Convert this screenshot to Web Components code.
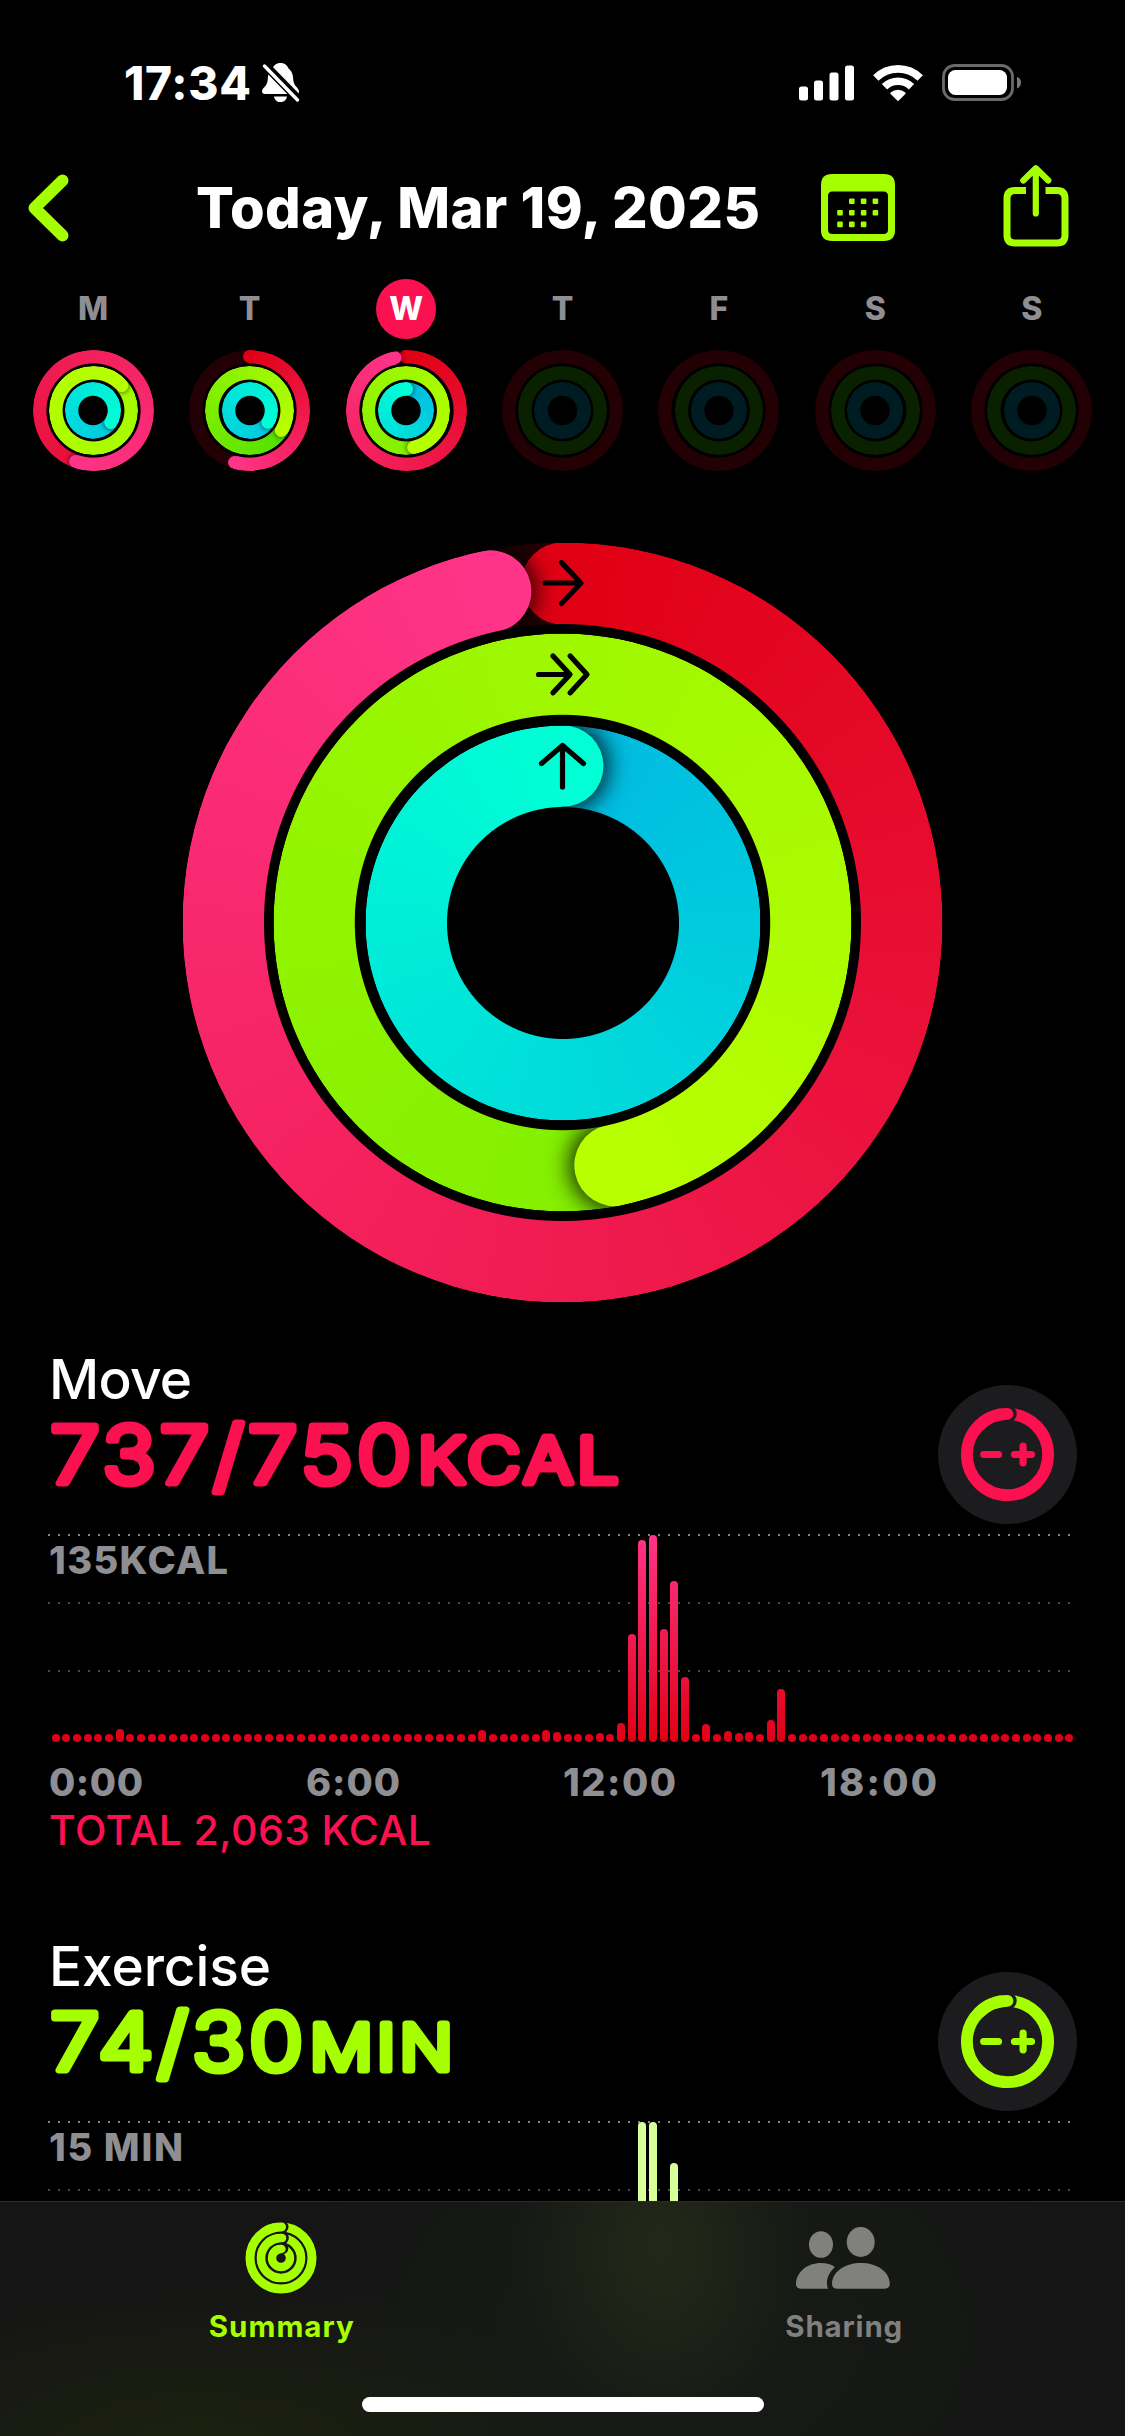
<!DOCTYPE html>
<html lang="en">
<head>
<meta charset="utf-8">
<title>Activity</title>
<style>
  html, body {
    margin: 0;
    background: #000;
  }

  body {
    width: 1125px;
    height: 2436px;
    overflow: hidden;
    font-family: Inter, "Liberation Sans", sans-serif;
    font-optical-sizing: none;
    color: #fff;
  }
</style>
</head>
<body>
<activity-app>
  <status-bar slot="status" time="17:34"></status-bar>
  <nav-header slot="header">Today, Mar 19, 2025</nav-header>

  <week-strip slot="week">
    <week-day letter="M">
      <activity-rings size="mini"
        move="199.3 #e80f38 #ff3488 lap"
        exercise="49 #a4fa00 #b8ff00 lap"
        stand="124 #00c8e0 #00ffd5 lap"></activity-rings>
    </week-day>
    <week-day letter="T">
      <activity-rings size="mini"
        move="196 #e00014 #ff3488"
        exercise="122 #52e000 #b8ff00 lap"
        stand="123.5 #00c8e0 #00ffd5 lap"></activity-rings>
    </week-day>
    <week-day letter="W" selected>
      <activity-rings size="mini"
        move="347.8 #e00014 #ff3488"
        exercise="168.5 #82ef00 #b8ff00 lap"
        stand="0 #00b9e1 #00ffd5 lap"></activity-rings>
    </week-day>
    <week-day letter="T"><activity-rings size="mini"></activity-rings></week-day>
    <week-day letter="F"><activity-rings size="mini"></activity-rings></week-day>
    <week-day letter="S"><activity-rings size="mini"></activity-rings></week-day>
    <week-day letter="S"><activity-rings size="mini"></activity-rings></week-day>
  </week-strip>

  <activity-rings slot="rings" size="big"
    move="347.7 #e00014 #ff3488"
    exercise="167.8 #82ef00 #b8ff00 lap"
    stand="0 #00b9e1 #00ffd5 lap"></activity-rings>

  <metric-card slot="cards" name="Move" name-width="139" value="737/750" value-width="365"
    unit="KCAL" unit-x="369" unit-width="205" scale="135KCAL" scale-width="179" style="--tint: #fb1050">
    <bar-chart slot="chart" colors="#ff3488 #e00014"
      bars="6:13 40:12 46:12 47:10 51:9.3 53:19.5 54:108 55:202 56:207 57:113 58:161 59:65 61:18 63:10.7 64:9 65:10 67:22.5 68:53"></bar-chart>
    <fit-label slot="total" width="382">TOTAL 2,063 KCAL</fit-label>
  </metric-card>

  <metric-card slot="cards" name="Exercise" name-width="218" value="74/30" value-width="257"
    unit="MIN" unit-x="261" unit-width="147" scale="15 MIN" scale-width="134" style="--tint: #a6ff00">
    <bar-chart slot="chart" colors="#d9ff99 #d9ff99" bars="55:207 56:207 58:166"></bar-chart>
  </metric-card>

  <tab-bar slot="tabs"></tab-bar>
</activity-app>

<script>
/**
 * Three concentric rings, with optional arrows on the big size.
 * Each ring attribute: "head-angle start-colour end-colour [lap]"
 */
const RING_SIZES = {
  big: { outer: [380, 289.2, 197.5], width: 81.5, shadow: '0 0 22px 5px rgba(0, 0, 0, 0.8)' },
  mini: { outer: [60.5, 44.3, 28.1], width: 13.4, shadow: '0 0 4px 1px rgba(0, 0, 0, 0.5)' }
}

customElements.define('activity-rings',
  class extends HTMLElement {
    constructor () {
      super()
      this.attachShadow({ mode: 'open' })
    }

    connectedCallback () {
      const size = RING_SIZES[this.getAttribute('size')]
      const names = ['move', 'exercise', 'stand']
      const tracks = ['#220004', '#0a2100', '#001c23']
      const rings = names.map((name, i) => this.ring(size, size.outer[i], tracks[i], this.getAttribute(name))).join('')

      this.shadowRoot.innerHTML = `
<style>
:host {
  display: grid;
  place-items: center;
  width: ${size.outer[0] * 2}px;
  height: ${size.outer[0] * 2}px;
}
.ring, svg { grid-area: 1 / 1; }
.ring {
  display: grid;
  border-radius: 50%;
  overflow: hidden;
}
.ring > * { grid-area: 1 / 1; }
/* halves reach 1px over the middle, so no seam shows under the cap */
.half {
  width: calc(50% + 1px);
  overflow: hidden;
}
.turn { display: flex; justify-content: flex-end; }
.start { justify-content: flex-start; }
.cap {
  width: ${size.width}px;
  height: ${size.width}px;
  border-radius: 50%;
}
.head .cap {
  margin-left: ${1 - size.width / 2}px;
  box-shadow: ${size.shadow};
}
.start .half { display: flex; justify-content: flex-end; }
.start .cap { flex: none; margin-right: ${1 - size.width / 2}px; }
svg { z-index: 1; }
</style>
${rings}
${this.getAttribute('size') === 'big' ? this.arrows() : ''}`
    }

    ring (size, outer, track, spec) {
      const inner = outer - size.width
      const mask = `radial-gradient(circle, transparent ${inner - 0.5}px, #000 ${inner + 0.5}px)`
      let layers = ''
      if (spec) {
        const [angle, from, to, lap] = spec.split(' ')
        if (lap) {
          layers = `<div style="background: conic-gradient(from ${angle}deg, ${from}, ${to})"></div>`
        } else {
          layers = `<div style="background: conic-gradient(${from}, ${to} ${angle}deg, transparent ${angle}deg)"></div>
<div class="turn start"><div class="half"><div class="cap" style="background: ${from}"></div></div></div>`
        }
        layers += `<div class="turn head" style="transform: rotate(${angle}deg)"><div class="half"><div class="cap" style="background: ${to}"></div></div></div>`
      }
      return `<div class="ring" style="width: ${outer * 2}px; height: ${outer * 2}px; background: ${track}; -webkit-mask: ${mask}; mask: ${mask}">${layers}</div>`
    }

    arrows () {
      return `
<svg width="760" height="760" viewBox="-380 -380 760 760" fill="none" stroke="#000" stroke-width="5.2" stroke-linecap="round" stroke-linejoin="round">
  <path d="M-17.500 -339.500H17.500M-1 -360L18.500 -339.500L-1 -319"/>
  <path d="M-24 -248H7M-9.500 -266.500L7.500 -248L-9.500 -229.700M7.700 -266.500L24.500 -248L7.700 -229.700"/>
  <path d="M0 -176V-135.500M-21 -159L0 -177L21 -159"/>
</svg>`
    }
  }
)

const statusTemplate = document.createElement('template')
statusTemplate.innerHTML = `
<style>
:host {
  display: flex;
  justify-content: space-between;
  align-items: center;
  box-sizing: border-box;
  height: 140px;
  padding: 26px 103px 0 124px;
}
div { display: flex; align-items: center; }
fit-label { font-size: 46px; line-height: 46px; font-weight: 800; }
.bell { margin-left: 11px; }
.wifi { margin: 0 19px 0 19px; }
</style>
<div>
  <fit-label width="127"></fit-label>
  <svg class="bell" width="38" height="40" viewBox="0 0 38 40">
    <path fill="#fff" d="M18.500 0C14 0 11.500 2.500 10.500 5.500C7 8 6 12 5.800 16C5.500 20 4.500 22 2 24.500C0.500 26 0 27.500 0 28.500C0 30 1 31 3 31H34.500C36.500 31 37 30 37 28.500C37 27 36 25.700 35 24.500C32.500 22 31.500 20 31.200 16C31 12 30 8 26.500 5.500C25.500 2.500 23 0 18.500 0ZM12 33.500H25C24.500 37 22 39 18.500 39C15 39 12.500 37 12 33.500Z"/>
    <path stroke="#000" stroke-width="8.500" d="M0 -1L40 40"/>
    <path stroke="#fff" stroke-width="3.400" stroke-linecap="round" d="M2.500 3L35.500 37"/>
  </svg>
</div>
<div>
  <svg width="55" height="36" viewBox="0 0 55 36" fill="#fff">
    <rect x="0" y="21.500" width="9" height="14" rx="2.500"/>
    <rect x="15" y="15.500" width="9" height="20" rx="2.500"/>
    <rect x="30.500" y="7.500" width="9" height="28" rx="2.500"/>
    <rect x="46" y="0.500" width="9" height="35" rx="2.500"/>
  </svg>
  <svg class="wifi" width="50" height="37" viewBox="0 0 50 37" fill="none">
    <path stroke="#fff" stroke-width="7.600" d="M2.800 13A31.500 31.500 0 0 1 47.200 13"/>
    <path stroke="#fff" stroke-width="7.600" d="M11.500 21.800A19.200 19.200 0 0 1 38.500 21.800"/>
    <path fill="#fff" d="M25 36.300L17.400 28.700Q17 28 17.700 27.500A11 11 0 0 1 32.300 27.500Q33 28 32.600 28.700Z"/>
  </svg>
  <svg width="80" height="38" viewBox="0 0 80 38">
    <rect x="1.500" y="1.500" width="69" height="34" rx="11" fill="none" stroke="#6a6a6a" stroke-width="2.800"/>
    <rect x="6" y="6" width="59" height="25" rx="7.500" fill="#fff"/>
    <path fill="#777" d="M75 13C78 13.500 79 16 79 18.500C79 21 78 23.500 75 24.500Z"/>
  </svg>
</div>
`

customElements.define('status-bar',
  class extends HTMLElement {
    constructor () {
      super()
      this.attachShadow({ mode: 'open' })
    }

    connectedCallback () {
      const content = statusTemplate.content.cloneNode(true)
      content.querySelector('fit-label').textContent = this.getAttribute('time')
      this.shadowRoot.replaceChildren(content)
    }
  }
)

const headerTemplate = document.createElement('template')
headerTemplate.innerHTML = `
<style>
:host {
  display: flex;
  align-items: center;
  box-sizing: border-box;
  height: 135px;
  padding: 0 56px 0 28px;
}
fit-label {
  flex: 1;
  margin-left: 126px;
  font-size: 56px;
  line-height: 60px;
  font-weight: 800;
}
.share { margin: -3px 0 0 108px; }
</style>
<svg width="42" height="68" viewBox="0 0 42 68" fill="none" stroke="#a6ff00" stroke-width="12" stroke-linecap="round" stroke-linejoin="round">
  <path d="M34.500 6.500L6.500 34L34.500 61.500"/>
</svg>
<fit-label width="564"></fit-label>
<svg width="74" height="67" viewBox="0 0 74 67" fill="#a6ff00">
  <path fill-rule="evenodd" d="M11 0H63Q74 0 74 11V56Q74 67 63 67H11Q0 67 0 56V11Q0 0 11 0ZM11.500 17.500Q7 17.500 7 22V55.500Q7 60 11.500 60H62.500Q67 60 67 55.500V22Q67 17.500 62.500 17.500Z"/>
  <g id="dots"></g>
</svg>
<svg class="share" width="66" height="84" viewBox="0 0 66 84" fill="none" stroke="#a6ff00" stroke-width="7">
  <path d="M23 26.500H12Q4 26.500 4 34.500V71Q4 79 12 79H54Q62 79 62 71V34.500Q62 26.500 54 26.500H42.500"/>
  <path stroke-width="6.200" stroke-linecap="round" stroke-linejoin="round" d="M32.800 49.500V5M20.300 16.500L32.800 4.200L45.300 16.500"/>
</svg>
`

customElements.define('nav-header',
  class extends HTMLElement {
    constructor () {
      super()
      this.attachShadow({ mode: 'open' })
    }

    connectedCallback () {
      const content = headerTemplate.content.cloneNode(true)
      content.querySelector('fit-label').textContent = this.textContent
      this.shadowRoot.replaceChildren(content)

      // calendar days, first row starts in the second column
      let dots = ''
      for (let i = 1; i < 11; i++) {
        const x = 16.2 + (i % 4) * 11.8
        const y = 24.4 + Math.floor(i / 4) * 11.6
        dots += `<rect x="${x}" y="${y}" width="5.600" height="5.600" rx="1"/>`
      }
      this.shadowRoot.querySelector('#dots').innerHTML = dots
    }
  }
)

customElements.define('week-strip',
  class extends HTMLElement {
    constructor () {
      super()
      this.attachShadow({ mode: 'open' }).innerHTML = `
<style>
:host { display: grid; grid-template-columns: repeat(7, 1fr); padding: 4px 15px 0; }
</style>
<slot></slot>`
    }
  }
)

customElements.define('week-day',
  class extends HTMLElement {
    constructor () {
      super()
      this.attachShadow({ mode: 'open' }).innerHTML = `
<style>
:host {
  display: flex;
  flex-direction: column;
  align-items: center;
  gap: 11px;
}
span {
  width: 60px;
  border-radius: 50%;
  color: #8e8e93;
  font-size: 32px;
  line-height: 60px;
  font-weight: 800;
  text-align: center;
}
:host([selected]) span { background: #fb1050; color: #fff; }
</style>
<span>${this.getAttribute('letter')}</span>
<slot></slot>`
    }
  }
)

customElements.define('bar-chart',
  class extends HTMLElement {
    constructor () {
      super()
      this.attachShadow({ mode: 'open' })
    }

    connectedCallback () {
      const [top, bottom] = this.getAttribute('colors').split(' ')
      const heights = new Array(96).fill(8)
      this.getAttribute('bars').split(' ').forEach(bar => {
        const [index, height] = bar.split(':')
        heights[index] = height
      })
      this.shadowRoot.innerHTML = `
<style>
:host {
  display: flex;
  justify-content: space-between;
  align-items: flex-end;
  width: 1023.2px;
  height: 208px;
}
i {
  width: 8px;
  border-radius: 4px;
  background: linear-gradient(${top}, ${bottom}) bottom / 100% 207px;
}
</style>
${heights.map(h => `<i style="height: ${h}px"></i>`).join('')}`
    }
  }
)

/**
 * Round button with the goal ring and its minus and plus.
 */
customElements.define('goal-button',
  class extends HTMLElement {
    constructor () {
      super()
      this.attachShadow({ mode: 'open' }).innerHTML = `
<style>
:host { display: block; width: 139px; height: 139px; border-radius: 50%; background: #1c1c1e; color: var(--tint); }
svg { display: block; }
</style>
<svg width="139" height="139" viewBox="-69.5 -69.5 139 139" fill="none" stroke="currentColor" stroke-linecap="round">
  <circle r="40.600" stroke-width="11.800"/>
  <circle cx="0.500" cy="-40.600" r="8.700" fill="#1c1c1e" stroke="none"/>
  <path stroke-width="11.800" d="M-28.700 -28.700A40.600 40.600 0 0 1 0 -40.600"/>
  <path stroke-width="7.200" d="M-23.800 0H-9M7 0H24M15.600 -8.300V8.300"/>
</svg>`
    }
  }
)

customElements.define('metric-card',
  class extends HTMLElement {
    constructor () {
      super()
      this.attachShadow({ mode: 'open' })
    }

    connectedCallback () {
      const get = name => this.getAttribute(name)
      this.shadowRoot.innerHTML = `
<style>
:host { display: block; height: 587px; }
header {
  display: flex;
  justify-content: space-between;
  align-items: flex-end;
  box-sizing: border-box;
  height: 185px;
  padding: 0 48px 0 49px;
}
.title { align-self: flex-start; }
.name { font-size: 55px; line-height: 60px; font-weight: 500; }
.value { display: block; overflow: visible; }
.value text {
  font-weight: 300;
  letter-spacing: 4px;
  fill: var(--tint);
  stroke: var(--tint);
  stroke-width: 7.2px;
  stroke-linejoin: round;
}
goal-button { margin-bottom: 10px; }
.plot { display: grid; height: 208px; margin-left: 48px; }
.plot > * { grid-area: 1 / 1; }
.lines { display: grid; grid-template-rows: 68px 68px 72px; width: 1022px; }
.lines div {
  background: repeating-linear-gradient(90deg, #48484b 0 2px, transparent 2px 10px) top / 100% 2px no-repeat;
}
.lines div:first-child {
  background-image: repeating-linear-gradient(90deg, #858589 0 2px, transparent 2px 10px);
}
.scale, .axis {
  color: #8e8e93;
  font-size: 38px;
  line-height: 38px;
  font-weight: 800;
}
.scale { padding: 7px 0 0 1px; }
.chart { padding-left: 3.5px; }
.axis {
  display: grid;
  grid-template-columns: repeat(4, 257px);
  margin: 21px 0 9px 49px;
}
.total {
  display: block;
  margin-left: 49px;
  color: var(--tint);
  font-size: 41px;
  line-height: 40px;
  font-weight: 500;
}
</style>
<header>
  <div class="title">
    <fit-label class="name" width="${Number(get('name-width')) + 4}">${get('name')}</fit-label>
    <svg class="value" width="620" height="96">
      <text x="1.500" y="74" font-size="79" textLength="${get('value-width')}" lengthAdjust="spacingAndGlyphs">${get('value')}</text>
      <text x="${get('unit-x')}" y="74" font-size="63" textLength="${get('unit-width')}" lengthAdjust="spacingAndGlyphs">${get('unit')}</text>
    </svg>
  </div>
  <goal-button></goal-button>
</header>
<div class="plot">
  <div class="lines">
    <div><fit-label class="scale" width="${get('scale-width')}">${get('scale')}</fit-label></div>
    <div></div>
    <div></div>
  </div>
  <div class="chart"><slot name="chart"></slot></div>
</div>
<div class="axis">
  <fit-label width="94">0:00</fit-label>
  <fit-label width="94">6:00</fit-label>
  <fit-label width="113">12:00</fit-label>
  <fit-label width="117">18:00</fit-label>
</div>
<div class="total"><slot name="total"></slot></div>`
    }
  }
)

const tabTemplate = document.createElement('template')
tabTemplate.innerHTML = `
<style>
:host {
  display: grid;
  grid-template: 184px 1fr / 1fr 1fr;
  box-sizing: border-box;
  height: 235px;
  border-top: 1px solid #2b2b2c;
  background:
    radial-gradient(ellipse 150px 190px at 660px 40px, rgba(50, 60, 28, 0.45), transparent),
    radial-gradient(ellipse 420px 170px at 200px 250px, rgba(34, 44, 8, 0.55), transparent),
    radial-gradient(ellipse 420px 300px at 680px 130px, rgba(24, 34, 22, 0.5), transparent),
    #151515;
}
.tab {
  display: flex;
  flex-direction: column;
  align-items: center;
  font-size: 29.5px;
  line-height: 30px;
  font-weight: 700;
}
.tab svg { margin-top: 15px; }
.tab fit-label { margin-top: 12px; }
.on { color: #a6ff00; }
.off { color: #80807f; }
.home {
  grid-column: 1 / 3;
  justify-self: center;
  width: 402px;
  height: 15px;
  margin-top: 11px;
  border-radius: 8px;
  background: #fff;
}
</style>
<div class="tab on">
  <svg width="82" height="82" viewBox="-41 -41 82 82" fill="none" stroke="currentColor" stroke-linecap="round">
    <g stroke-width="9">
      <circle r="31"/>
      <circle cx="1" cy="-31" r="6.500" fill="#151515" stroke="none"/>
      <path d="M-15 -27.100A31 31 0 0 1 0.500 -31"/>
    </g>
    <g stroke-width="8.600">
      <circle r="20"/>
      <circle cx="1.500" cy="-20" r="6.300" fill="#151515" stroke="none"/>
      <path d="M-12 -16A20 20 0 0 1 1 -20"/>
    </g>
    <g stroke-width="8.400">
      <circle r="9"/>
      <circle cx="1.500" cy="-9.500" r="5.800" fill="#151515" stroke="none"/>
      <path d="M-7 -5.600A9 9 0 0 1 0.500 -9"/>
    </g>
  </svg>
  <fit-label width="145">Summary</fit-label>
</div>
<div class="tab off">
  <svg width="96" height="82" viewBox="0 0 96 82" fill="currentColor">
    <ellipse cx="25" cy="27.500" rx="12" ry="13.300"/>
    <ellipse cx="64.700" cy="25" rx="14" ry="15"/>
    <path d="M36 71.800H65H88.500C92 71.800 94 69.500 93.800 66C93 54 80.500 46 65 46C49.500 46 37 54 36 66C35.800 69.500 37.500 71.800 41 71.800Z"/>
    <path d="M5 71.800C1.500 71.800 0 69.500 0 66.500C0.500 55 11 46 25 46C30.500 46 35.500 47.500 39 50C32.500 56 29 64 32 71.800Z"/>
  </svg>
  <fit-label width="117">Sharing</fit-label>
</div>
<div class="home"></div>
`

customElements.define('tab-bar',
  class extends HTMLElement {
    constructor () {
      super()
      this.attachShadow({ mode: 'open' })
        .appendChild(tabTemplate.content.cloneNode(true))
    }
  }
)

customElements.define('activity-app',
  class extends HTMLElement {
    constructor () {
      super()
      this.attachShadow({ mode: 'open' }).innerHTML = `
<style>
:host {
  display: flex;
  flex-direction: column;
  width: 1125px;
  height: 2436px;
  overflow: hidden;
}
main { flex: 1; min-height: 0; overflow: hidden; }
.rings { display: flex; justify-content: center; margin: 71px 1px 47px 0; transform: translate(0.5px, 0.5px); }
</style>
<slot name="status"></slot>
<slot name="header"></slot>
<main>
  <slot name="week"></slot>
  <div class="rings"><slot name="rings"></slot></div>
  <slot name="cards"></slot>
</main>
<slot name="tabs"></slot>`
    }
  }
)

/**
 * Text that is tracked so that it fills a given width.
 * Defined last: it measures itself with the styles of its hosts in place.
 */
customElements.define('fit-label',
  class extends HTMLElement {
    constructor () {
      super()
      this.attachShadow({ mode: 'open' }).innerHTML = `
<style>
:host { display: block; white-space: nowrap; }
span { display: inline-block; }
</style>
<span><slot></slot></span>`
    }

    connectedCallback () {
      const span = this.shadowRoot.querySelector('span')
      const width = Number(this.getAttribute('width'))
      const gaps = this.textContent.length - 1
      if (!width || gaps < 1) return
      const space = (width - span.getBoundingClientRect().width) / gaps
      span.style.letterSpacing = space + 'px'
      span.style.marginRight = -space + 'px'
    }
  }
)
</script>
</body>
</html>
